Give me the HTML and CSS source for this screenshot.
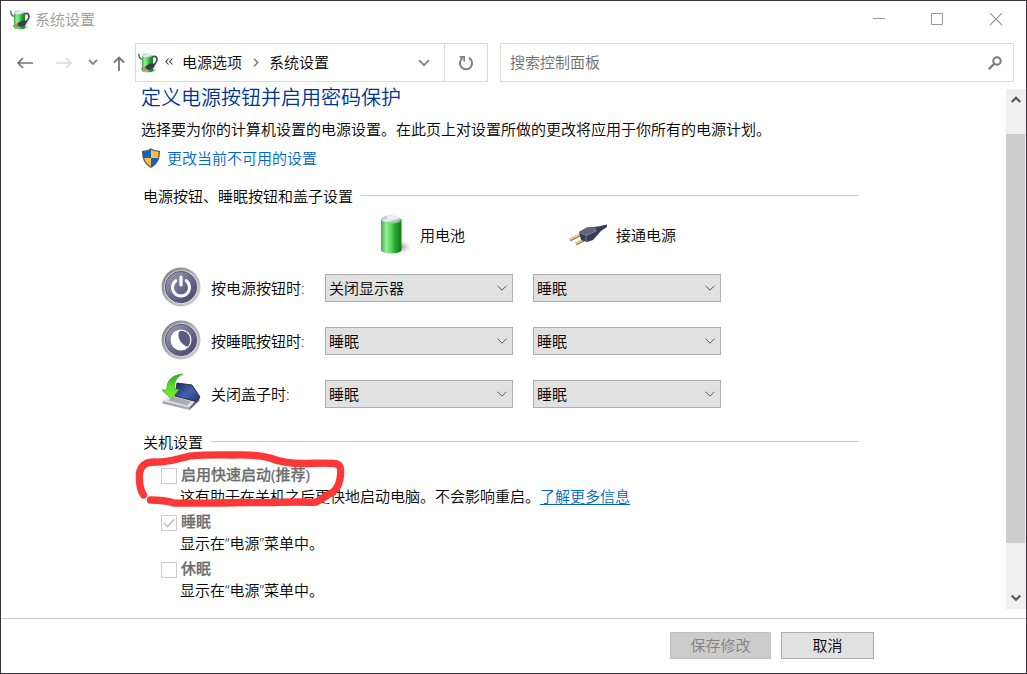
FILE: index.html
```html
<!DOCTYPE html>
<html lang="zh-CN">
<head>
<meta charset="utf-8">
<title>系统设置</title>
<link rel="stylesheet" href="styles.css">
</head>
<body>
<svg class="defs" width="0" height="0" aria-hidden="true">
  <defs>
    <linearGradient id="green" x1="0" x2="1" y1="0" y2="0">
      <stop offset="0" stop-color="#3fae48"/><stop offset=".25" stop-color="#93ee93"/><stop offset=".5" stop-color="#5bd45b"/><stop offset=".72" stop-color="#22a32b"/><stop offset="1" stop-color="#15761d"/>
    </linearGradient>
    <linearGradient id="cap" x1="0" x2="1" y1="0" y2="1">
      <stop offset="0" stop-color="#9a9fb8"/><stop offset=".5" stop-color="#f2f3f8"/><stop offset="1" stop-color="#8d91ac"/>
    </linearGradient>
    <linearGradient id="ring" x1="0" x2="1" y1="0" y2="1">
      <stop offset="0" stop-color="#777"/><stop offset=".5" stop-color="#b4b4b4"/><stop offset="1" stop-color="#d0d0d0"/>
    </linearGradient>
    <linearGradient id="disc" x1="0" x2="1" y1="0" y2="1">
      <stop offset="0" stop-color="#a3a3ba"/><stop offset=".5" stop-color="#6c6c91"/><stop offset="1" stop-color="#40406a"/>
    </linearGradient>
    <linearGradient id="screen" x1="0" x2="1" y1="0" y2="1">
      <stop offset="0" stop-color="#1c2750"/><stop offset=".55" stop-color="#4263b4"/><stop offset="1" stop-color="#22305f"/>
    </linearGradient>
    <linearGradient id="arrow" x1="0" x2="0" y1="0" y2="1">
      <stop offset="0" stop-color="#2aa822"/><stop offset=".5" stop-color="#5fdc2a"/><stop offset="1" stop-color="#7af02c"/>
    </linearGradient>
    <radialGradient id="shade"><stop offset="0" stop-color="#777" stop-opacity=".7"/><stop offset="1" stop-color="#999" stop-opacity="0"/></radialGradient>
    <symbol id="power-plan" viewBox="0 0 20 20">
      <ellipse cx="15" cy="17" rx="4.500" ry="2.500" fill="url(#shade)"/>
      <path d="M.8.8C.8 4 2 6 4.500 6.500" fill="none" stroke="#5b6273" stroke-width="1.500"/>
      <path d="M14 4.200c3-1.700 5-.6 5 2.200 0 2.400-1.500 3.200-2.600 5.200" fill="none" stroke="#464b5e" stroke-width="1.700"/>
      <path d="M4 2.500v15.300c0 2 11 2 11 0V2.500z" fill="url(#green)"/>
      <ellipse cx="9.500" cy="2.300" rx="5.500" ry="2.100" fill="url(#cap)"/>
      <path d="M6.500 14l5.500-3.500 5.500.3-1.500 3.700-5 2.500-3.500-.7z" fill="#3a3a48"/>
      <path d="M3 16.200l5-2M5.500 18l4-1.700" stroke="#b08b55" stroke-width="1.500"/>
    </symbol>
    <symbol id="chev" viewBox="0 0 10 6"><path d="M.5.700L5 5.200 9.500.700" fill="none" stroke="#555" stroke-width="1"/></symbol>
  </defs>
</svg>
<div class="window">
  <header class="titlebar">
    <svg class="app-icon" width="20" height="20"><use href="#power-plan"/></svg>
    <span class="title">系统设置</span>
    <div class="caption">
      <svg width="14" height="14" viewBox="0 0 14 14"><path d="M2 5.500h12" stroke="#999"/></svg>
      <svg width="14" height="14" viewBox="0 0 14 14"><path d="M1.500.5h11v11h-11z" fill="none" stroke="#999"/></svg>
      <svg width="14" height="14" viewBox="0 0 14 14"><path d="M1 0l12 12M13 0L1 12" stroke="#999" stroke-width="1.100"/></svg>
    </div>
  </header>
  <nav class="nav">
    <div class="arrows">
      <svg width="16" height="12" viewBox="0 0 16 12"><path d="M1 6h15M6 1L1 6l5 5" fill="none" stroke="#777" stroke-width="1.700"/></svg>
      <svg width="16" height="12" viewBox="0 0 16 12"><path d="M0 6h15M10 1l5 5-5 5" fill="none" stroke="#ddd" stroke-width="1.700"/></svg>
      <svg width="10" height="7" viewBox="0 0 10 7"><path d="M1 1l4 4 4-4" fill="none" stroke="#858585" stroke-width="1.800"/></svg>
      <svg class="up" width="12" height="15" viewBox="0 0 12 15"><path d="M6 15V1.500M1 6.500l5-5 5 5" fill="none" stroke="#777" stroke-width="1.800"/></svg>
    </div>
    <div class="address">
      <svg class="crumb-icon" width="20" height="20"><use href="#power-plan"/></svg>
      <svg class="back-crumbs" width="8" height="7" viewBox="0 0 8 7"><path d="M3.600.5L.9 3.500l2.700 3M7.400.5L4.700 3.500l2.700 3" fill="none" stroke="#333" stroke-width="1.100"/></svg>
      <span>电源选项</span>
      <svg class="sep" width="6" height="9" viewBox="0 0 6 9"><path d="M1 .7l3.700 3.800L1 8.300" fill="none" stroke="#777" stroke-width="1.500"/></svg>
      <span>系统设置</span>
      <svg class="drop" width="12" height="8" viewBox="0 0 12 8"><path d="M1 1.200l5 5 5-5" fill="none" stroke="#858585" stroke-width="1.900"/></svg>
      <div class="refresh">
        <svg width="16" height="16" viewBox="0 0 16 16"><path d="M11 2.900A6.100 6.100 0 1 1 4.600 3.100" fill="none" stroke="#808080" stroke-width="2"/><path d="M1.500 1.800h4.700v4.700" fill="none" stroke="#808080" stroke-width="1.700"/></svg>
      </div>
    </div>
    <div class="search">
      <span>搜索控制面板</span>
      <svg width="14" height="14" viewBox="0 0 14 14"><circle cx="9" cy="5" r="3.700" fill="none" stroke="#777" stroke-width="2"/><path d="M6.200 7.800L.8 13.200" stroke="#777" stroke-width="2.200"/></svg>
    </div>
  </nav>
  <div class="body">
    <main class="content">
      <h1 class="heading">定义电源按钮并启用密码保护</h1>
      <p class="desc">选择要为你的计算机设置的电源设置。在此页上对设置所做的更改将应用于你所有的电源计划。</p>
      <div class="admin">
        <svg width="20" height="20" viewBox="0 0 20 20">
          <path d="M10 1c3 2 5.500 2.300 8.300 2.400C18.500 11 16 16 10 19.200 4 16 1.500 11 1.700 3.400 4.500 3.300 7 3 10 1z" fill="#fdbc36"/>
          <path d="M10 1v9H2.200C1.800 8 1.700 5.500 1.700 3.400 4.500 3.300 7 3 10 1z" fill="#0f63c0"/>
          <path d="M10 10h7.800c-1 4-3.600 7-7.800 9.200z" fill="#0f63c0"/>
          <path d="M10 1c3 2 5.500 2.300 8.300 2.400C18.500 11 16 16 10 19.200 4 16 1.500 11 1.700 3.400 4.500 3.300 7 3 10 1z" fill="none" stroke="#50565c" stroke-width="1.300"/>
        </svg>
        <a class="link">更改当前不可用的设置</a>
      </div>
      <h2 class="section"><span>电源按钮、睡眠按钮和盖子设置</span></h2>
      <div class="modes">
        <div class="mode battery">
          <svg width="34" height="42" viewBox="0 0 34 42">
            <ellipse cx="23" cy="33" rx="10" ry="6.500" fill="url(#shade)"/>
            <path d="M3 5v31c0 4.500 20.500 4.500 20.500 0V5z" fill="url(#green)"/>
            <path d="M3 5c0 5.500 20.500 5.500 20.500 0" fill="none" stroke="#7be07b"/>
            <ellipse cx="13.250" cy="5" rx="9.500" ry="3.400" fill="url(#cap)"/>
            <ellipse cx="12.500" cy="3.300" rx="3.800" ry="1.500" fill="#eef0f7"/>
          </svg>
          <span>用电池</span>
        </div>
        <div class="mode plug">
          <svg width="40" height="24" viewBox="0 0 40 24">
            <path d="M2 17l11-5.500M8 21l9-4.500" stroke="#9b6b38" stroke-width="3"/>
            <path d="M2 16.300l11-5.500M8 20.300l9-4.500" stroke="#e9c692" stroke-width="2"/>
            <path d="M11 9l8-4.500 11-1 9-2v2.500l-6 4-8 9-6 2-6-2z" fill="#3a3d52"/>
            <path d="M11 9l8-4.500 8-.5 2 4-10 4.500z" fill="#62667c"/>
            <path d="M18 12.500l10-4.500M11.500 9.500l6.500 3v6" fill="none" stroke="#858a9e" stroke-width=".8"/>
          </svg>
          <span>接通电源</span>
        </div>
      </div>
      <div class="rows">
        <div class="row">
          <svg width="40" height="40" viewBox="0 0 40 40"><circle cx="20" cy="20" r="19.500" fill="url(#ring)"/><circle cx="20" cy="20" r="16.700" fill="#e3e3e9"/><circle cx="20" cy="20" r="15.700" fill="url(#disc)" stroke="#5a5a76"/><path d="M14.800 13.700a8.500 8.500 0 1 0 10.400 0" fill="none" stroke="#fff" stroke-width="3" stroke-linecap="round"/><path d="M20 10v8" stroke="#fff" stroke-width="3.200" stroke-linecap="round"/></svg>
          <span class="label">按电源按钮时:</span>
          <div class="select"><span>关闭显示器</span><svg width="10" height="6"><use href="#chev"/></svg></div>
          <div class="select"><span>睡眠</span><svg width="10" height="6"><use href="#chev"/></svg></div>
        </div>
        <div class="row">
          <svg width="40" height="40" viewBox="0 0 40 40"><circle cx="20" cy="20" r="19.500" fill="url(#ring)"/><circle cx="20" cy="20" r="16.700" fill="#e3e3e9"/><circle cx="20" cy="20" r="15.700" fill="url(#disc)" stroke="#5a5a76"/><circle cx="20" cy="20" r="10.500" fill="#fff"/><path d="M19 10.800c6.500-.5 10.200 4 10.200 9.200 0 3-1 5.200-2.700 6.700-5-2-8.500-6-9-10.500-.2-2 .3-4 1.500-5.400z" fill="#5a5a82"/></svg>
          <span class="label">按睡眠按钮时:</span>
          <div class="select"><span>睡眠</span><svg width="10" height="6"><use href="#chev"/></svg></div>
          <div class="select"><span>睡眠</span><svg width="10" height="6"><use href="#chev"/></svg></div>
        </div>
        <div class="row">
          <svg width="40" height="40" viewBox="0 0 40 40">
            <path d="M1.500 28l11-8 26 4-10 10.500z" fill="#dfe1e8"/>
            <path d="M1.500 28l27 6.500V37L1.500 30.500z" fill="#a5a8b2"/><path d="M28.500 34.500l10-11v4l-10 9.500z" fill="#62646e"/>
            <path d="M7 27.500l6-4 17 5-4 4z" fill="#a9adb8"/>
            <path d="M16 10l15 2 8 12-4 4.500-21-5.500z" fill="url(#screen)" stroke="#2b3148"/>
            <path d="M22 1C11 2 5.500 7 5.800 17H1l9.500 9L18 16.500h-4.500C13 9 15 4.500 22 1z" fill="url(#arrow)" stroke="#34b024" stroke-width=".7"/>
          </svg>
          <span class="label">关闭盖子时:</span>
          <div class="select"><span>睡眠</span><svg width="10" height="6"><use href="#chev"/></svg></div>
          <div class="select"><span>睡眠</span><svg width="10" height="6"><use href="#chev"/></svg></div>
        </div>
      </div>
      <h2 class="section shutdown"><span>关机设置</span></h2>
      <div class="options">
        <div class="option">
          <div class="check"><i class="box"></i><b>启用快速启动(推荐)</b></div>
          <p class="hint">这有助于在关机之后更快地启动电脑。不会影响重启。<a class="link more">了解更多信息</a></p>
        </div>
        <div class="option">
          <div class="check"><i class="box"><svg width="14" height="14" viewBox="0 0 14 14"><path d="M2 7l3.500 3.500L12 3.500" fill="none" stroke="#bfbfbf" stroke-width="1.600"/></svg></i><b>睡眠</b></div>
          <p class="hint">显示在“电源”菜单中。</p>
        </div>
        <div class="option">
          <div class="check"><i class="box"></i><b>休眠</b></div>
          <p class="hint">显示在“电源”菜单中。</p>
        </div>
      </div>
    </main>
    <div class="scrollbar">
      <svg width="10" height="8" viewBox="0 0 10 8"><path d="M.7 7L5 2.700 9.300 7" fill="none" stroke="#555" stroke-width="2.200"/></svg>
      <div class="thumb"></div>
      <svg class="down" width="10" height="8" viewBox="0 0 10 8"><path d="M.7 1.500L5 5.800l4.300-4.300" fill="none" stroke="#555" stroke-width="2.200"/></svg>
    </div>
  </div>
  <footer class="footer">
    <div class="btn save">保存修改</div>
    <div class="btn cancel">取消</div>
  </footer>
  <svg class="marker" width="220" height="64" viewBox="130 448 220 64">
    <path d="M143.500 495C140 490 139 482 139.500 473C141 465 146 462 155 462C168 462.500 176 459 188 456.500C198 454.500 215 455 232 455C248 454.500 260 455 270 458C280 462 290 463.500 303 463.500C315 463.500 325 462.500 334 463.500C341 464 341 469 340.500 475C340 483 338 488 333 492C326 495 321 501 314 502.500C295 501 275 503 250 502.500C225 503 195 503.500 174 503C164 500 158 500 150.500 500" fill="none" stroke="#fb3738" stroke-width="7.300" stroke-linecap="round" stroke-linejoin="round"/>
  </svg>
</div>
</body>
</html>
```
FILE: styles.css
```css
* { box-sizing: border-box; }
body {
  margin: 0;
  font: 350 15px/24px "Open Sans", "Noto Sans CJK SC", sans-serif;
  color: #000;
  background: #fff;
}
h1, h2, p { margin: 0; font-weight: inherit; }
svg { display: block; flex: none; }
.defs { position: absolute; }
.window {
  position: relative;
  display: flex;
  flex-direction: column;
  width: 1027px;
  height: 674px;
  border: 1px solid #38353b;
  overflow: hidden;
  white-space: nowrap;
}
.titlebar { display: flex; align-items: center; height: 37px; padding: 0 23px 0 9px; }
.title { margin-left: 5px; padding-bottom: 2px; color: #999; }
.caption { display: flex; gap: 45px; margin-left: auto; }
.nav { display: flex; height: 39px; margin-top: 5px; }
.arrows { display: flex; align-items: center; width: 134px; padding-left: 16px; }
.arrows svg:nth-child(2) { margin-left: 23px; }
.arrows svg:nth-child(3) { margin-left: 16px; }
.arrows svg:nth-child(4) { margin: 2px 0 0 15px; }
.address { display: flex; align-items: center; width: 353px; border: 1px solid #d9d9d9; padding-left: 2px; }
.address span, .search span { padding-bottom: 2px; }
.back-crumbs { margin: 0 9px 2px 7px; }
.sep { margin: 0 10px 1px 11px; }
.drop { margin: 1px 14px 0 auto; }
.refresh { display: flex; align-items: center; justify-content: center; align-self: stretch; width: 43px; border-left: 1px solid #d9d9d9; }
.search { display: flex; align-items: center; justify-content: space-between; width: 514px; margin-left: 12px; padding: 0 11px 0 9px; border: 1px solid #d9d9d9; color: #6d6d6d; }
.body { display: flex; height: 527px; }
.content { flex: 1; padding: 4px 0 0 140px; }
.heading { font-size: 20px; color: #003399; }
.desc { margin-top: 7px; }
.admin { display: flex; align-items: center; gap: 6px; margin-top: 5px; }
.link { color: #0066cc; }
.section { display: flex; align-items: center; width: 718px; margin-top: 14px; padding-left: 2px; font-size: 15px; }
.section::after { content: ""; flex: 1; height: 1px; margin: 0 0 1px 8px; background: #ccc; }
.modes { display: grid; grid-template-columns: 190px auto; height: 42px; margin: 6px 0 0 237px; }
.mode { display: flex; align-items: center; gap: 8px; }
.rows { display: grid; gap: 1px; margin-top: 6px; padding-left: 20px; }
.row { display: grid; grid-template-columns: 50px 114px 208px 188px; align-items: center; height: 52px; }
.row > svg { margin-bottom: 2px; }
.select { display: flex; align-items: center; justify-content: space-between; width: 188px; height: 28px; padding: 0 5px 0 3px; background: #e1e1e1; border: 1px solid #adadad; }
.shutdown { margin-top: 10px; }
.options { display: grid; gap: 4px; margin-top: 10px; padding-left: 20px; }
.check { display: flex; align-items: center; gap: 4px; height: 22px; color: #6d6d6d; }
.check b { font-weight: 500; -webkit-text-stroke: .25px #6d6d6d; padding-bottom: 2px; }
.box { width: 16px; height: 16px; border: 1px solid #ccc; background: #fff; margin-top: 2px; }
.hint { height: 21px; line-height: 21px; padding-left: 19px; }
.more { text-decoration: underline; text-underline-offset: 2px; }
.scrollbar { display: flex; flex-direction: column; align-items: center; width: 20px; height: 520px; margin-top: 7px; padding: 6px 0 7px; background: #f0f0f0; }
.thumb { width: 19px; height: 409px; margin: 31px 1px 0 0; background: #cdcdcd; }
.down { margin-top: auto; }
.footer { display: flex; gap: 10px; height: 55px; margin-top: 9px; padding: 13px 0 0 669px; border-top: 1px solid #ccc; }
.btn { height: 27px; line-height: 24px; text-align: center; border: 1px solid #adadad; background: #e1e1e1; }
.save { width: 101px; color: #838383; background: #ccc; border-color: #bfbfbf; }
.cancel { width: 93px; }
.marker { position: absolute; left: 129px; top: 447px; }
```
